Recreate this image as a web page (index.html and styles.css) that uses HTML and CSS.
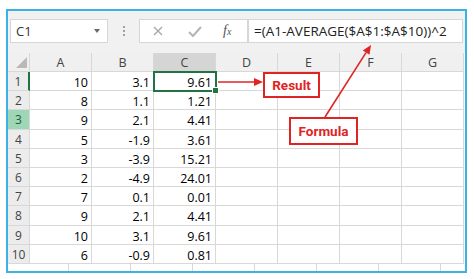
FILE: index.html
```html
<!DOCTYPE html>
<html lang="en">
<head>
    <meta charset="UTF-8">
    <meta name="viewport" content="width=device-width, initial-scale=1.0">
    <title>Excel formula example</title>
    <link rel="stylesheet" href="styles.css">
</head>
<body>

<div class="frame">
    <div class="toolbar">
        <div class="namebox">
            <span>C1</span>
            <span class="caret"></span>
        </div>
        <div class="grip"><i></i><i></i><i></i></div>
        <div class="fbtns">
            <svg class="ico" width="10" height="10" viewBox="0 0 10 10"><path d="M1 1L9 9M9 1L1 9" stroke="#a8a8a8" stroke-width="1.4" fill="none"/></svg>
            <svg class="ico" width="14" height="11" viewBox="0 0 14 11"><path d="M1 6L5 10L13 1" stroke="#b4b4b4" stroke-width="2" fill="none"/></svg>
            <span class="fx">f<small>x</small></span>
        </div>
        <div class="finput">=(A1-AVERAGE($A$1:$A$10))^2</div>
    </div>

    <div class="sheet">
        <div class="corner"><span class="tri"></span></div>
        <div class="colhead">A</div>
        <div class="colhead">B</div>
        <div class="colhead sel">C</div>
        <div class="colhead">D</div>
        <div class="colhead">E</div>
        <div class="colhead">F</div>
        <div class="colhead">G</div>

        <div class="rowhead cur">1</div><div class="cell">10</div><div class="cell">3.1</div><div class="cell active">9.61<span class="handle"></span></div><div class="cell"></div><div class="cell"></div><div class="cell"></div><div class="cell"></div>
        <div class="rowhead">2</div><div class="cell">8</div><div class="cell">1.1</div><div class="cell">1.21</div><div class="cell"></div><div class="cell"></div><div class="cell"></div><div class="cell"></div>
        <div class="rowhead hl">3</div><div class="cell">9</div><div class="cell">2.1</div><div class="cell">4.41</div><div class="cell"></div><div class="cell"></div><div class="cell"></div><div class="cell"></div>
        <div class="rowhead">4</div><div class="cell">5</div><div class="cell">-1.9</div><div class="cell">3.61</div><div class="cell"></div><div class="cell"></div><div class="cell"></div><div class="cell"></div>
        <div class="rowhead">5</div><div class="cell">3</div><div class="cell">-3.9</div><div class="cell">15.21</div><div class="cell"></div><div class="cell"></div><div class="cell"></div><div class="cell"></div>
        <div class="rowhead">6</div><div class="cell">2</div><div class="cell">-4.9</div><div class="cell">24.01</div><div class="cell"></div><div class="cell"></div><div class="cell"></div><div class="cell"></div>
        <div class="rowhead">7</div><div class="cell">7</div><div class="cell">0.1</div><div class="cell">0.01</div><div class="cell"></div><div class="cell"></div><div class="cell"></div><div class="cell"></div>
        <div class="rowhead">8</div><div class="cell">9</div><div class="cell">2.1</div><div class="cell">4.41</div><div class="cell"></div><div class="cell"></div><div class="cell"></div><div class="cell"></div>
        <div class="rowhead">9</div><div class="cell">10</div><div class="cell">3.1</div><div class="cell">9.61</div><div class="cell"></div><div class="cell"></div><div class="cell"></div><div class="cell"></div>
        <div class="rowhead">10</div><div class="cell">6</div><div class="cell">-0.9</div><div class="cell">0.81</div><div class="cell"></div><div class="cell"></div><div class="cell"></div><div class="cell"></div>
    </div>

    <div class="tail">
        <span class="first"></span><span></span><span></span><span></span><span></span><span></span><span></span><span class="last"></span>
    </div>

    <!-- annotations drawn over the sheet -->
    <svg class="arrows" width="457" height="260" viewBox="0 0 457 260">
        <line x1="210" y1="71" x2="248" y2="71" stroke="#e02424" stroke-width="1.6"/>
        <polygon points="255,71 246,67 246,75" fill="#e02424"/>
        <line x1="317" y1="106" x2="358" y2="41.6" stroke="#e02424" stroke-width="1.6"/>
        <polygon points="363,34 361.5,43.8 354.8,39.4" fill="#e02424"/>
    </svg>
    <div class="callout result">Result</div>
    <div class="callout formula">Formula</div>
</div>

</body>
</html>
```

FILE: styles.css
```css
body {
    margin: 0;
    background: #fff;
    font-family: 'Open Sans', sans-serif;
}
.frame {
    position: relative;
    box-sizing: border-box;
    width: 461px;
    height: 264px;
    margin: 9px 0 0 6px;
    border: 2px solid #3cb1e3;
    background: #f1f1f1;
    overflow: hidden;
}

/* formula bar */
.toolbar {
    display: flex;
    height: 42px;
    box-sizing: border-box;
    padding: 8px 2px 10px 2px;
}
.namebox, .fbtns, .finput {
    height: 24px;
    box-sizing: border-box;
    background: #fff;
    border: 1px solid #d6d6d6;
    display: flex;
    align-items: center;
}
.namebox {
    width: 98px;
    padding: 0 6px 0 5px;
    justify-content: space-between;
    font-size: 13px;
    color: #333;
}
.caret {
    width: 0;
    height: 0;
    border-left: 3px solid transparent;
    border-right: 3px solid transparent;
    border-top: 4px solid #6a6a6a;
    margin-right: 1px;
}
.grip {
    width: 31px;
    display: flex;
    flex-direction: column;
    align-items: center;
    justify-content: center;
    gap: 2px;
}
.grip i {
    width: 2px;
    height: 2px;
    background: #a0a0a0;
}
.fbtns {
    width: 109px;
    padding-left: 13px;
    gap: 25px;
}
.fx {
    font-family: 'Liberation Serif', serif;
    font-style: italic;
    font-size: 14px;
    color: #555;
    margin-left: -4px;
}
.fx small {
    font-size: 10px;
}
.finput {
    flex: 1;
    padding-left: 5px;
    font-size: 13.5px;
    color: #222;
}

/* grid */
.sheet {
    display: grid;
    grid-template-columns: 22px repeat(7, 62px);
    grid-template-rows: 19px repeat(10, 19.2px);
    background: #fff;
    font-size: 12.5px;
}
.sheet > div {
    box-sizing: border-box;
    border-right: 1px solid #d8d8d8;
    border-bottom: 1px solid #d8d8d8;
}
.corner {
    position: relative;
    background: #f0f0f0;
}
.tri {
    position: absolute;
    right: 2px;
    bottom: 3px;
    width: 0;
    height: 0;
    border-left: 11px solid transparent;
    border-bottom: 11px solid #b9b9b9;
}
.colhead {
    background: #f0f0f0;
    color: #444;
    text-align: center;
    line-height: 19px;
    font-size: 12.5px;
}
.colhead.sel {
    background: #d5d5d5;
}
.rowhead {
    background: #ececec;
    color: #444;
    text-align: center;
    line-height: 19px;
    font-size: 12px;
}
.rowhead.cur {
    border-right: 2px solid #217346 !important;
}
.rowhead.hl {
    background: #9fd6b6;
    color: #205d3a;
}
.cell {
    text-align: right;
    padding: 1px 3px 0 0;
    line-height: 19px;
    color: #000;
}
.cell.active {
    position: relative;
    z-index: 1;
    outline: 2px solid #217346;
    outline-offset: -1px;
}
.handle {
    position: absolute;
    right: -4px;
    bottom: -4px;
    width: 5px;
    height: 5px;
    background: #217346;
    border: 1px solid #fff;
}

.tail {
    display: flex;
    height: 7px;
    background: #fff;
}
.tail span {
    width: 62px;
    box-sizing: border-box;
    border-right: 1px solid #d8d8d8;
}
.tail .first {
    width: 61px;
}
.tail .last {
    flex: 1;
    border-right: none;
}

/* annotations */
.arrows {
    position: absolute;
    left: 0;
    top: 0;
    pointer-events: none;
}
.callout {
    position: absolute;
    box-sizing: border-box;
    border: 2px solid #e02424;
    background: #fff;
    color: #e02424;
    font-family: Roboto, sans-serif;
    font-weight: bold;
    font-size: 13.5px;
    display: flex;
    align-items: center;
    justify-content: center;
}
.callout.result {
    left: 255px;
    top: 61px;
    width: 57px;
    height: 26px;
}
.callout.formula {
    left: 281px;
    top: 106px;
    width: 69px;
    height: 28px;
}
```
